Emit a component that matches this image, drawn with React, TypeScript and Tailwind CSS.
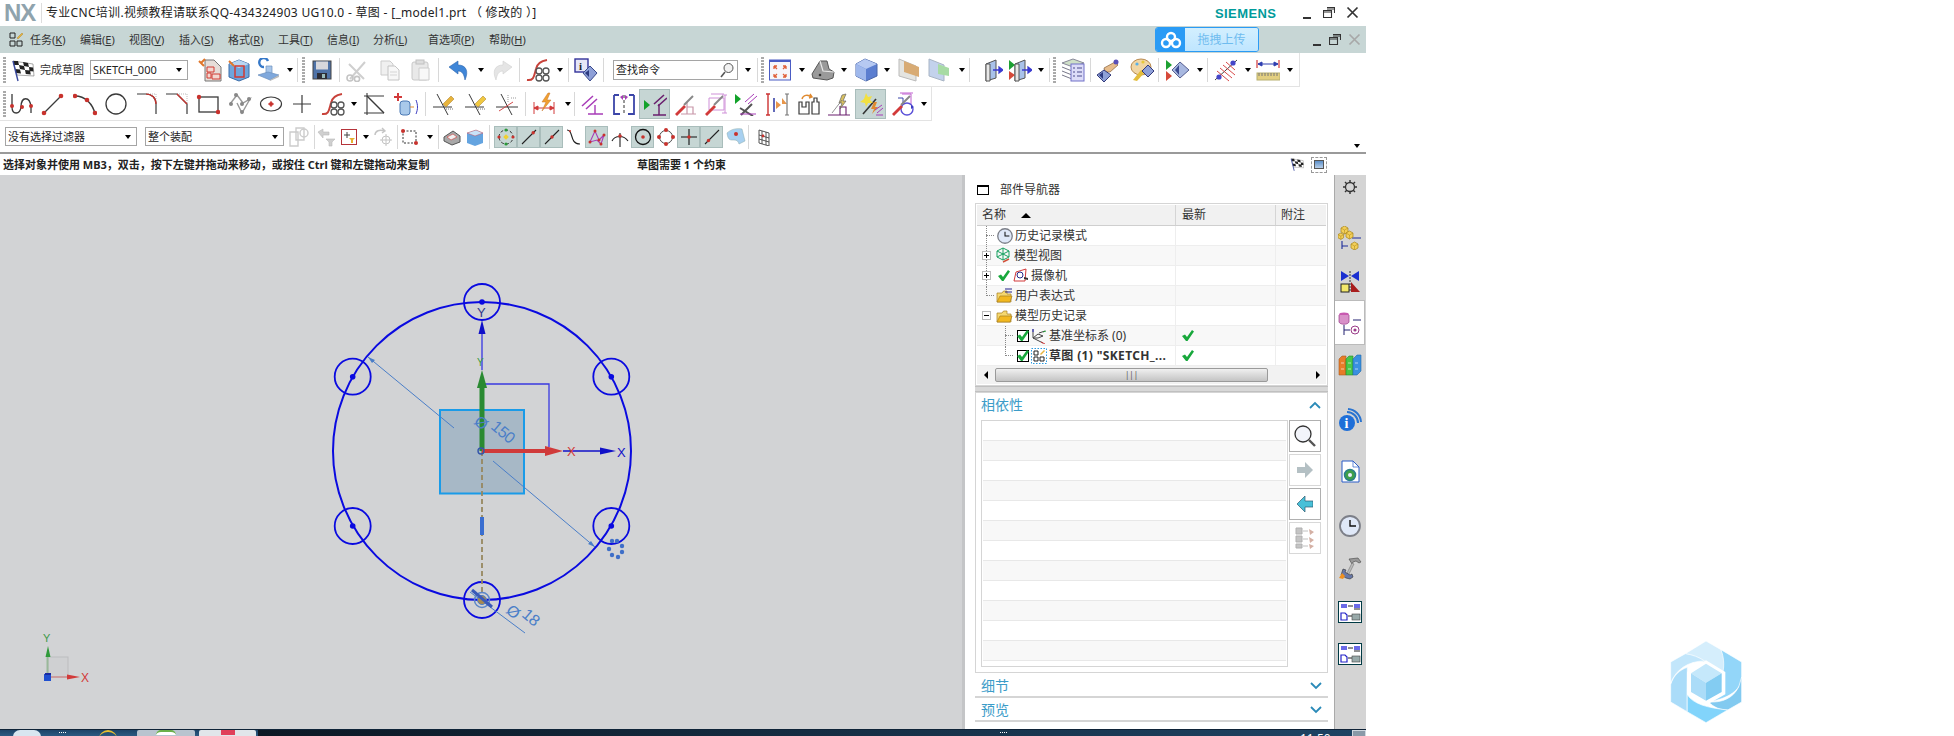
import React from "react";

const R = "#c8322d";
const D = "#3a3a3a";
const P = "#a83cb8";
const M = "#6a1f6e";
const B = "#3b45a8";

function Ic({ w = 24, h = 24, children }: { w?: number; h?: number; children?: React.ReactNode }) {
  return (
    <svg width={w} height={h} viewBox={`0 0 ${w} ${h}`} fill="none" className="block shrink-0">
      {children}
    </svg>
  );
}

const Dot = ({ x, y, r = 2, c = R }: { x: number; y: number; r?: number; c?: string }) => <circle cx={x} cy={y} r={r} fill={c} />;

/* ---------- toolbar icons ---------- */
const Flag = ({ s = 1 }: { s?: number }) => (
  <svg width={24 * s} height={24 * s} viewBox="0 0 24 24" className="block shrink-0">
    <path d="M2 3 L22 6 L23 18 L6 17 Z" fill="#fff" stroke="#555" strokeWidth=".5" />
    <path d="M2 3h5l1 4H3zM12 4l5 1 1 4-5-1zM8 7l5 1 1 4-5-1zM18 9l4 .5.5 4-4-.5zM4 11l5 .5 1 4-5-.5zM14 12l5 .5.8 4-5-.5z" fill="#222" />
    <path d="M2 3 L7 23" stroke="#3b4aa0" strokeWidth="1.4" />
  </svg>
);
const SheetA = () => (
  <Ic>
    <path d="M7 2h9l7 7v14H7z" fill="#e6ddd8" stroke="#777" />
    <path d="M1 3l5 5M7 1L3 5" stroke="#e0762a" strokeWidth="2" />
    <path d="M9 9h7v5H9zM9 15h4v5H9zM14 16h8v5h-8z" fill="#f3d7d0" stroke="#d13a33" />
  </Ic>
);
const CubeA = () => (
  <Ic>
    <path d="M12 2l10 4v13l-10 4-10-4V6z" fill="#6fa5dc" stroke="#3b6ca8" />
    <path d="M2 6l10 4 10-4-10-4z" fill="#b9d6f2" />
    <rect x="8" y="8" width="9" height="11" fill="none" stroke="#d13a33" strokeWidth="1.5" />
    <path d="M2 3l5 5" stroke="#e0762a" strokeWidth="2" />
  </Ic>
);
const MotionA = () => (
  <Ic>
    <path d="M8 9a4.5 4.5 0 1 1 4-6" stroke="#3578c8" strokeWidth="2.4" />
    <path d="M10 8h6v8h-6z" fill="#a8c6ea" stroke="#6b8fbd" strokeWidth=".7" />
    <path d="M2 17l10-3 11 3-9 5z" fill="#7fa8dc" stroke="#6b8fbd" strokeWidth=".7" />
    <path d="M14 22l9-5v2l-9 4z" fill="#bbb" />
  </Ic>
);
const Save = () => (
  <Ic w={20} h={20}>
    <rect x="1" y="1" width="18" height="18" fill="#4f73a8" stroke="#444" />
    <rect x="4" y="1.5" width="12" height="8" fill="#d8d8dc" />
    <rect x="5" y="13" width="10" height="6" fill="#2d2d35" />
    <rect x="10" y="14" width="3" height="4" fill="#9bb" />
  </Ic>
);
const Scissors = () => (
  <Ic>
    <path d="M5 21L20 4M19 21L4 6" stroke="#cfcfcf" strokeWidth="2" />
    <circle cx="5" cy="20" r="3" stroke="#c4c4c4" strokeWidth="1.6" />
    <circle cx="12" cy="21" r="2.6" stroke="#c4c4c4" strokeWidth="1.6" />
  </Ic>
);
const Copy = () => (
  <Ic>
    <path d="M3 3h9l3 3v11H3z" fill="#f0f0f0" stroke="#ccc" />
    <path d="M10 8h7l4 4v10H10z" fill="#f7f7f7" stroke="#c4c4c4" />
    <path d="M12 14h7M12 17h7" stroke="#d5d5d5" />
  </Ic>
);
const Paste = () => (
  <Ic>
    <rect x="3" y="4" width="16" height="18" rx="2" fill="#e9e9e9" stroke="#c8c8c8" />
    <rect x="7" y="2" width="8" height="4" fill="#ddd" stroke="#c0c0c0" />
    <path d="M10 10h10v12H10z" fill="#f8f8f8" stroke="#ccc" />
  </Ic>
);
const Undo = () => (
  <Ic>
    <path d="M2 9l9-6v4c8 0 11 6 7 15-1-6-3-9-7-9v3z" fill="#3f86d8" stroke="#2a63ab" strokeWidth=".6" />
  </Ic>
);
const Redo = () => (
  <Ic>
    <path d="M22 9l-9-6v4C5 7 2 13 6 22c1-6 3-9 7-9v3z" fill="#e5e5e5" stroke="#d0d0d0" strokeWidth=".6" />
  </Ic>
);
const Offset = () => (
  <Ic>
    <path d="M1 22c7 1 7-4 9-11 1-5 4-8 11-9" stroke="#c8423a" strokeWidth="2" />
    <circle cx="13" cy="13" r="3" stroke="#555" strokeWidth="1.3" />
    <circle cx="20" cy="13" r="3" stroke="#555" strokeWidth="1.3" />
    <circle cx="13" cy="20" r="3" stroke="#555" strokeWidth="1.3" />
    <circle cx="20" cy="20" r="3" stroke="#555" strokeWidth="1.3" />
  </Ic>
);
const InfoDia = () => (
  <Ic>
    <rect x="1" y="1" width="13" height="13" fill="#e6e6f7" stroke="#33339a" strokeWidth="1.4" />
    <text x="5" y="12" fontSize="11" fontWeight="700" fill="#222" fontFamily="Liberation Serif, serif">i</text>
    <path d="M16 8l7 7-7 8-7-8z" fill="#8ea0d8" stroke="#3a4a8c" />
    <path d="M15 12l-4 3 4 4z" fill="#2c3a80" />
  </Ic>
);
const Fit = () => (
  <Ic>
    <rect x="1.5" y="2" width="21" height="20" fill="#f6f6fb" stroke="#4a5cc4" />
    <rect x="1.5" y="2" width="21" height="2" fill="#4a5cc4" />
    <path d="M6 8l3 3M18 8l-3 3M6 19l3-3M18 19l-3-3M6 8h3M6 8v3M18 8h-3M18 8v3M6 19h3M6 19v-3M18 19h-3M18 19v-3" stroke="#e0603a" strokeWidth="1.3" />
  </Ic>
);
const Bracket = () => (
  <Ic>
    <path d="M1 16l8-13h7l2 8 5 3-1 6-6 2-14-2z" fill="#9a9a9a" stroke="#555" />
    <path d="M9 3l3 10 11 1" stroke="#e8e8e8" strokeWidth="1.2" />
    <circle cx="9" cy="17" r="1.3" fill="#333" />
  </Ic>
);
const Block = () => (
  <Ic>
    <path d="M2 6l9-5 12 5v12l-11 5-10-5z" fill="#5b7ed0" stroke="#4a66a8" />
    <path d="M2 6l9-5 12 5-11 5z" fill="#b6c9f2" />
    <path d="M2 6l10 5v12l-10-5z" fill="#9fb8ec" />
  </Ic>
);
const Plate1 = () => (
  <Ic>
    <path d="M3 1l17 7v15l-17-5z" fill="#e4e4e0" stroke="#bbb" />
    <path d="M8 3l15 6v10l-15-5z" fill="#d8ab74" />
  </Ic>
);
const Plate2 = () => (
  <Ic>
    <path d="M2 1l15 6v16L2 18z" fill="#c3d2ec" stroke="#a8b4c4" />
    <path d="M11 6l11 4v8l-11-2z" fill="#a7dba4" />
  </Ic>
);
const Door = ({ both }: { both?: boolean }) => (
  <Ic>
    {both && <path d="M1 2l6 5-6 5z" fill="#1da032" />}
    {both && <path d="M1 13l6 4-6 5z" fill="#d64a3a" />}
    <path d="M7 6l10-4v18l-10 3z" fill="#a9c2ea" stroke="#555" />
    <path d="M7 6h4v17H7z" fill="#e8e8e8" stroke="#555" />
    <path d="M14 12h9M20 9l4 3-4 3z" stroke="#3b3bd0" strokeWidth="1.3" fill="#3b3bd0" />
  </Ic>
);
const Stack = () => (
  <Ic>
    <path d="M1 5l11-4 11 4-11 4z" fill="#cfe0c8" stroke="#889" />
    <path d="M1 9l10 4M1 13l10 4M1 17l10 4" stroke="#778" />
    <rect x="10" y="6" width="13" height="17" fill="#dcdcf8" stroke="#7070c8" />
    <path d="M12 10h2M16 10h5M12 14h2M16 14h5M12 18h2M16 18h5" stroke="#4a4a8c" />
  </Ic>
);
const Hand = () => (
  <Ic>
    <path d="M8 10l11-6 3 3-8 7H9z" fill="#e8bd8c" stroke="#86603a" strokeWidth=".7" />
    <circle cx="20" cy="4" r="2.5" fill="#5a50b8" />
    <path d="M8 12l7 5-7 7-7-7z" fill="#8ea0d8" stroke="#333a7a" />
    <path d="M7 14l-4 3 4 4z" fill="#2c3a80" />
  </Ic>
);
const Palette = () => (
  <Ic>
    <ellipse cx="11" cy="9" rx="10" ry="8" fill="#f1d6a4" stroke="#b88a50" />
    <circle cx="7" cy="6" r="1.6" fill="#58b0e8" />
    <circle cx="13" cy="4" r="1.6" fill="#e8c838" />
    <path d="M3 22l8-10 4 2-8 9z" fill="#e3bd3c" />
    <path d="M18 7l6 6-6 6-6-6z" fill="#8ea0d8" stroke="#333a7a" />
  </Ic>
);
const Views = () => (
  <Ic>
    <path d="M1 2l6 5-6 5z" fill="#1da032" />
    <path d="M1 13l6 5-6 5z" fill="#d64a3a" />
    <path d="M15 4l9 8-9 8-8-8z" fill="#a8b8e0" stroke="#555e90" />
    <path d="M14 7l-4 5 4 5z" fill="#3a4a90" />
  </Ic>
);
const Section = () => (
  <Ic>
    <path d="M1 22L23 2" stroke="#444" />
    <path d="M6 10l12 10M9 7l12 10M12 4l9 8M3 13l12 10" stroke="#d84a4a" />
    <circle cx="5" cy="19" r="2.6" fill="#4545c8" />
    <circle cx="19" cy="5" r="2.6" fill="#4545c8" />
  </Ic>
);
const Ruler = () => (
  <Ic>
    <path d="M1 2v8M23 2v8" stroke="#d23a3a" strokeWidth="1.2" />
    <path d="M2 6h20M2 6l4-2v4zM22 6l-4-2v4z" stroke="#2f3fb0" fill="#2f3fb0" />
    <rect x="1" y="15" width="23" height="7" fill="#e3cf80" stroke="#b8b070" />
    <path d="M3 15v3M6 15v3M9 15v3M12 15v3M15 15v3M18 15v3M21 15v3" stroke="#777" />
  </Ic>
);
const Cloud = () => (
  <Ic w={22} h={18}>
    <circle cx="11" cy="6" r="4" stroke="#fff" strokeWidth="2.4" />
    <circle cx="6" cy="12" r="4" stroke="#fff" strokeWidth="2.4" />
    <circle cx="16" cy="12" r="4" stroke="#fff" strokeWidth="2.4" />
  </Ic>
);

/* row 2 */
const Spline = () => (
  <Ic w={26} h={24}>
    <path d="M3 2v13c0 8 8 8 9 0 0-11 9-11 10 0v6" stroke={D} strokeWidth="1.3" />
    <Dot x={3} y={14} /><Dot x={13} y={15} /><Dot x={22} y={14} />
  </Ic>
);
const Line = () => (
  <Ic>
    <path d="M3 21L20 4" stroke={D} strokeWidth="1.2" />
    <Dot x={3} y={21} r={2.3} /><Dot x={20} y={4} r={2.3} />
  </Ic>
);
const Arc = () => (
  <Ic>
    <path d="M2 4c10 0 18 8 20 18" stroke={D} strokeWidth="1.5" />
    <Dot x={2} y={4} r={2.3} /><Dot x={14} y={8} r={2.3} /><Dot x={22} y={21} r={2.3} />
  </Ic>
);
const Circle = () => (
  <Ic><circle cx="12" cy="12" r="10" stroke={D} strokeWidth="1.3" /></Ic>
);
const Fillet = () => (
  <Ic>
    <path d="M13 2h8v8" stroke="#bbb" strokeDasharray="1 1" />
    <path d="M2 2h9c6 0 10 4 10 10v10" stroke={D} strokeWidth="1.2" />
    <path d="M11 2c6 0 10 4 10 10" stroke={R} strokeWidth="1.2" />
  </Ic>
);
const Chamfer = () => (
  <Ic>
    <path d="M12 2h10v10" stroke="#bbb" strokeDasharray="1 1" />
    <path d="M1 2h11l10 10v10" stroke={D} strokeWidth="1.2" />
    <path d="M12 2l10 10" stroke={R} strokeWidth="1.2" />
  </Ic>
);
const Rect = () => (
  <Ic>
    <rect x="3" y="5" width="19" height="15" stroke={D} strokeWidth="1.3" />
    <Dot x={3} y={5} r={2.2} /><Dot x={22} y={20} r={2.2} />
  </Ic>
);
const Poly = () => (
  <Ic>
    <path d="M2 12l7-9 6 8 7-4-8 14-5-10" stroke="#999" strokeWidth="1.4" />
    <Dot x={3} y={12} c="#888" /><Dot x={8} y={3} c="#888" /><Dot x={14} y={12} c="#888" /><Dot x={21} y={7} c="#888" /><Dot x={14} y={20} c="#888" />
  </Ic>
);
const Ellipse = () => (
  <Ic>
    <ellipse cx="12" cy="12" rx="10.5" ry="7" stroke={D} strokeWidth="1.2" />
    <path d="M9 12h6M12 9v6" stroke={R} />
    <Dot x={12} y={12} />
  </Ic>
);
const Cross = () => (
  <Ic><path d="M3 12h18M12 3v18" stroke={D} strokeWidth="1.2" /></Ic>
);
const Trim = () => (
  <Ic>
    <path d="M1 4h20M1 21h20M4 1v22" stroke={D} strokeWidth="1.1" />
    <path d="M4 4l17 17" stroke={D} strokeWidth="1.4" />
  </Ic>
);
const Cyl = () => (
  <Ic>
    <path d="M0 5h8M4 1v8" stroke="#d23a3a" strokeWidth="2" />
    <rect x="6" y="9" width="10" height="14" rx="3" fill="#a9c9ea" stroke="#4a78b4" />
    <path d="M16 15h4" stroke="#e08a30" />
    <path d="M22 8c2 5 2 9 0 14" stroke="#3b3bc0" />
  </Ic>
);
const PencilA = ({ c = "#e8b43c" }: { c?: string }) => (
  <Ic>
    <path d="M1 15h19M5 2l11 21" stroke={D} />
    <path d="M11 12l8-8 3 3-8 8z" fill={c} stroke="#a57820" strokeWidth=".5" />
    <path d="M14 17h8" stroke="#777" strokeDasharray="1 1" />
  </Ic>
);
const Slash = () => (
  <Ic>
    <path d="M1 15h22M6 2l11 21" stroke={D} />
    <path d="M4 19l14-9" stroke="#d24a4a" />
    <path d="M13 3v8M16 6h6" stroke="#999" strokeDasharray="1 1" />
  </Ic>
);
const Bolt = () => (
  <Ic w={24} h={24}>
    <path d="M2 10v12M22 10v12M2 16h20M2 16l4-2v4zM22 16l-4-2v4z" stroke="#d23a3a" fill="#d23a3a" />
    <path d="M16 1l-6 9h4l-4 9 9-11h-4l3-7z" fill="#f0a030" stroke="#c8752a" strokeWidth=".5" />
  </Ic>
);
const Par = () => (
  <Ic>
    <path d="M2 14L13 4M6 17L17 7" stroke={P} strokeWidth="1.5" />
    <path d="M15 13v9M8 22h15" stroke={P} strokeWidth="1.4" />
  </Ic>
);
const ParFrame = () => (
  <Ic>
    <path d="M2 3h5M2 3v19h6M22 3h-5M22 3v19h-6" stroke={B} strokeWidth="1.8" />
    <path d="M12 3v20" stroke="#333" strokeDasharray="3 2" />
    <path d="M8 5l3-2 0 5zM16 5l-3-2 0 5z" fill={P} />
  </Ic>
);
const ParActive = () => (
  <Ic>
    <path d="M1 8l6 5-6 5z" fill="#12a22a" />
    <path d="M11 12L21 3M15 14L24 6" stroke={M} strokeWidth="1.6" />
    <path d="M16 12v11M10 23h13" stroke={M} strokeWidth="1.4" />
  </Ic>
);
const Tool = () => (
  <>
    <path d="M2 22l9-9 2 2-9 9z" fill="#d23a3a" />
    <path d="M11 13l9-9" stroke="#888" strokeWidth="2" />
  </>
);
const Driver1 = () => (
  <Ic>
    <path d="M8 22h15M14 10v12M14 15h6v7" stroke="#c896a8" strokeWidth="1.2" />
    <Tool />
  </Ic>
);
const Driver2 = () => (
  <Ic>
    <path d="M6 6h15v12H6zM22 3v18M19 3h5M19 21h5M8 2h13" stroke="#cf90d8" />
    <Tool />
  </Ic>
);
const Driver3 = () => (
  <Ic>
    <path d="M1 2l6 5-6 5z" fill="#12a22a" />
    <path d="M11 10l9-8M14 12l9-8" stroke={P} />
    <path d="M6 16l13 8M18 12L7 23" stroke="#555" strokeWidth="2" />
    <path d="M6 22h16" stroke={P} />
  </Ic>
);
const Opposing = () => (
  <Ic>
    <path d="M3 2v21M1 2h4M1 23h4" stroke="#cc3333" strokeWidth="1.4" />
    <path d="M9 6v14" stroke={B} strokeWidth="1.6" />
    <path d="M11 9l5 4-5 4zM17 6l5 6-5 0z" fill="#e8964a" />
    <path d="M22 2v21M20 2h4M20 23h4" stroke="#777" strokeWidth="1.2" />
  </Ic>
);
const Swap = () => (
  <Ic>
    <path d="M2 22V10h3v5h4v-5h3v12zM15 22V10h2V6h3v4h2v12z" stroke={D} strokeWidth="1.2" />
    <path d="M5 7c1-4 6-5 9-2M13 2l2 3-3 1" stroke="#e08a30" strokeWidth="1.4" />
  </Ic>
);
const Bolt2 = () => (
  <Ic>
    <path d="M0 23h22M12 14v9M12 15h6v8" stroke={M} strokeWidth="1.1" />
    <path d="M4 21L14 8M14 3l-3 8h3l-2 6 6-8h-3l3-7z" stroke="#666" fill="#d8c060" strokeWidth=".7" />
  </Ic>
);
const Wand = () => (
  <Ic>
    <path d="M4 22L17 7" stroke="#333" strokeWidth="1.6" />
    <path d="M7 1l2 4 4-1-2 4 3 3-5 0-2 4-1-4-5-1 4-3z" fill="#f2e040" />
    <path d="M15 10l-3 7h3l-2 5 6-7h-3l2-5z" fill="#e08a30" />
    <path d="M16 18l7-5M18 21l6-5M17 23h7" stroke={P} />
  </Ic>
);
const Auto = () => (
  <Ic>
    <path d="M12 2h9v10M10 1h13" stroke="#c060d0" />
    <path d="M8 6h5v6" stroke={B} />
    <circle cx="17" cy="17" r="6" stroke="#5a50d8" strokeWidth="1.4" />
    <path d="M21 13l3 2-3 2z" fill="#3b3bc0" />
    <Tool />
  </Ic>
);

/* row 3 */
const Chain = () => (
  <Ic><path d="M3 7h8v14H3zM9 3h8v12H9z" stroke="#ccc" strokeWidth="1.4" /><circle cx="17" cy="8" r="4" stroke="#ccc" strokeWidth="1.4" /></Ic>
);
const GFilter = () => (
  <Ic w={20} h={20}><path d="M1 5l5-3v3h6v3H6v3zM9 12h9l-3 3v4h-3v-4z" fill="#cfcfcf" stroke="#bbb" strokeWidth=".6" /></Ic>
);
const RFilter = () => (
  <Ic w={16} h={16}>
    <rect x=".5" y=".5" width="15" height="15" fill="#fff" stroke="#b5333a" />
    <path d="M6 3v6M3 6h6" stroke="#444" /><path d="M8 9h6l-2 2v3h-2v-3z" fill="#e8b030" />
  </Ic>
);
const GCross = () => (
  <Ic w={20} h={20}>
    <path d="M2 8c0-4 5-6 9-4M9 1l3 3-3 2" stroke="#c4c4c4" strokeWidth="1.4" />
    <circle cx="13" cy="13" r="4" stroke="#c4c4c4" /><path d="M13 7v12M7 13h12" stroke="#c4c4c4" />
  </Ic>
);
const RectSel = () => (
  <Ic w={18} h={18}>
    <rect x="2" y="3" width="13" height="12" stroke="#333" strokeDasharray="2 1.5" />
    <Dot x={2} y={3} /><Dot x={15} y={15} />
  </Ic>
);
const Shade1 = () => (
  <Ic w={18} h={18}>
    <path d="M1 9l9-6 7 5v6l-8 3-8-4z" fill="#a8a8a8" stroke="#555" />
    <path d="M4 9l6-3 4 3-6 3z" fill="#f0f0f0" stroke="#d23a3a" strokeWidth=".6" />
  </Ic>
);
const Shade2 = () => (
  <Ic w={18} h={18}>
    <path d="M1 5l9-3 7 3v10l-8 3-8-3z" fill="#64a4e0" />
    <path d="M1 5l9-3 7 3-8 3z" fill="#c8e2f8" stroke="#c8505a" strokeWidth=".5" />
  </Ic>
);
const SnapEnd = () => (
  <Ic w={18} h={18}>
    <path d="M2 9a7 7 0 0 1 14 0a7 7 0 0 1-14 0" stroke="#333" strokeDasharray="3 2" />
    <rect x="7" y="7" width="4" height="4" fill="#f0d030" transform="rotate(45 9 9)" />
    <Dot x={2} y={9} r={1.6} /><Dot x={16} y={9} r={1.6} /><Dot x={9} y={2} r={1.6} c="#2a9a3a" /><Dot x={9} y={16} r={1.6} c="#2a9a3a" />
  </Ic>
);
const SnapLine = ({ t = 0.8 }: { t?: number }) => (
  <Ic w={18} h={18}>
    <path d="M2 16L16 2" stroke="#222" strokeWidth="1.1" />
    <Dot x={2 + 14 * t} y={16 - 14 * t} r={1.7} />
  </Ic>
);
const SnapCurve = () => (
  <Ic w={20} h={20}><path d="M3 3c7 0 2 14 13 14" stroke="#222" strokeWidth="1.2" /><Dot x={6} y={4} r={1} /></Ic>
);
const SnapPoly = () => (
  <Ic w={18} h={18}>
    <path d="M2 14L7 3l4 9 5-5-3 9-4-4z" stroke={P} strokeWidth="1.1" />
    <Dot x={7} y={3} r={1.5} /><Dot x={11} y={12} r={1.5} /><Dot x={16} y={7} r={1.5} /><Dot x={13} y={16} r={1.5} /><Dot x={2} y={14} r={1.5} />
  </Ic>
);
const SnapTan = () => (
  <Ic w={20} h={20}>
    <path d="M2 14c3-6 12-6 16 0M10 6v14" stroke="#222" strokeWidth="1.1" />
    <Dot x={10} y={9} r={1.8} />
  </Ic>
);
const SnapCenter = () => (
  <Ic w={18} h={18}><circle cx="9" cy="9" r="7.5" stroke="#111" strokeWidth="1.3" /><Dot x={9} y={9} r={1.8} /></Ic>
);
const SnapRing = () => (
  <Ic w={20} h={20}>
    <circle cx="10" cy="10" r="6.5" stroke="#444" />
    <Dot x={10} y={3} /><Dot x={10} y={17} /><Dot x={3} y={10} /><Dot x={17} y={10} />
  </Ic>
);
const SnapCross = () => (
  <Ic w={18} h={18}><path d="M1 9h16M9 1v16" stroke="#111" strokeWidth="1.1" /><Dot x={9} y={9} r={1.8} /></Ic>
);
const SnapFace = () => (
  <Ic w={20} h={20}>
    <path d="M1 6c4-4 10-5 15-4l3 12-6 3c-1-3-2-4-5-4-3 0-6 1-7-7z" fill="#a8d0f0" stroke="#8aa" strokeWidth=".5" />
    <Dot x={10} y={7} />
  </Ic>
);
const Grid = () => (
  <Ic w={14} h={18}>
    <path d="M2 2l10 3v13L2 15zM5 3v13M9 4v13M2 7l10 3M2 11l10 3" stroke="#444" strokeWidth=".9" />
    <Dot x={6} y={8} r={1.4} />
  </Ic>
);

/* right rail */
const Gear = () => (
  <Ic w={16} h={16}>
    <circle cx="8" cy="8" r="4.5" stroke="#333" strokeWidth="1.3" />
    <path d="M8 1v2.5M8 12.5V15M1 8h2.5M12.5 8H15M3 3l2 2M11 11l2 2M13 3l-2 2M5 11l-2 2" stroke="#333" strokeWidth="1.4" />
  </Ic>
);
const Cubelet = ({ x, y, s = 5 }: { x: number; y: number; s?: number }) => (
  <g transform={`translate(${x} ${y})`}>
    <path d={`M0 ${s * 0.4}L${s * 0.7} 0L${s * 1.4} ${s * 0.4}V${s * 1.2}L${s * 0.7} ${s * 1.6}L0 ${s * 1.2}z`} fill="#f3cf58" stroke="#a88418" strokeWidth=".7" />
    <path d={`M0 ${s * 0.4}L${s * 0.7} ${s * 0.8}L${s * 1.4} ${s * 0.4}M${s * 0.7} ${s * 0.8}V${s * 1.6}`} stroke="#a88418" strokeWidth=".5" />
  </g>
);
const Assemblies = () => (
  <Ic>
    <path d="M4 15v8M4 20h6M14 12h9" stroke="#1a2a9a" strokeWidth="1.1" />
    <Cubelet x={3} y={0} s={5} />
    <Cubelet x={8} y={5} s={5} />
    <Cubelet x={0} y={7} s={4} />
    <Cubelet x={13} y={16} s={5} />
  </Ic>
);
const Constraints = () => (
  <Ic w={20} h={24}>
    <path d="M1 1l8 5-8 5zM19 1l-8 5 8 5z" fill="#1a2fd0" />
    <rect x="1" y="14" width="8" height="8" fill="#f3e86a" stroke="#222" />
    <path d="M11 22V12l9 10z" fill="#a81d1d" />
    <path d="M10 1v21" stroke="#333" strokeDasharray="2 1" />
  </Ic>
);
const PartNav = () => (
  <Ic>
    <ellipse cx="6" cy="4" rx="5" ry="2.4" fill="#c85ab0" />
    <path d="M1 4v7c1 3 9 3 10 0V4" fill="#d890c8" stroke="#9a3a88" strokeWidth=".7" />
    <path d="M15 9h8M6 14v10M6 19h6" stroke="#222070" />
    <circle cx="17" cy="19" r="4" stroke="#9a3a88" /><circle cx="17" cy="19" r="1.6" fill="#9a3a88" />
  </Ic>
);
const Books = () => (
  <Ic w={24} h={22}>
    <path d="M1 5l3-3h4v19H1z" fill="#e87c28" stroke="#a85a20" strokeWidth=".6" />
    <path d="M8 5l3-3h4v19H8z" fill="#48c848" stroke="#28882a" strokeWidth=".6" />
    <path d="M15 5l4-4h4v16l-4 4h-4z" fill="#3a90e0" stroke="#2268a8" strokeWidth=".6" />
    <path d="M3 9h3M10 9h3M17 9h3M3 15h3M10 15h3M17 15h3" stroke="#ffffff" strokeOpacity=".6" />
  </Ic>
);
const InfoWave = () => (
  <Ic>
    <circle cx="9" cy="15" r="8" fill="#1f6fd8" />
    <text x="6.5" y="20" fontSize="14" fontWeight="700" fill="#fff" fontFamily="Liberation Serif, serif">i</text>
    <path d="M9 4a11 11 0 0 1 11 11M10 1a14 14 0 0 1 13 13" stroke="#2a74d0" strokeWidth="2" />
  </Ic>
);
const DocGlobe = () => (
  <Ic w={20} h={24}>
    <path d="M2 1h11l6 6v15H2z" fill="#fff" stroke="#2a5cc8" />
    <path d="M13 1v6h6" stroke="#2a5cc8" strokeWidth=".7" />
    <circle cx="10" cy="15" r="5.5" fill="#3fa04a" stroke="#2a7f8a" strokeWidth="1.5" />
    <circle cx="10" cy="15" r="2" fill="#eef" />
  </Ic>
);
const Clock = ({ s = 22 }: { s?: number }) => (
  <svg width={s} height={s} viewBox="0 0 22 22" className="block shrink-0">
    <circle cx="11" cy="11" r="10" fill="#dfe8f8" stroke="#7c7f88" strokeWidth="1.8" />
    <path d="M11 5v6h6" stroke="#111" strokeWidth="1.4" fill="none" />
  </svg>
);
const Tools = () => (
  <Ic>
    <path d="M11 2l9-1 3 4-2 1-3-2-3 1-1 2z" fill="#999" stroke="#444" strokeWidth=".6" />
    <path d="M14 6l2 1-6 12-2-1z" fill="#bbb" stroke="#666" strokeWidth=".5" />
    <path d="M5 12l3 1-1 2 5 3 2-1 1 3-3 2-4-1-5-3z" fill="#6878a8" stroke="#333" strokeWidth=".6" />
    <path d="M1 21l3-5 3 3-2 3z" fill="#f09020" />
  </Ic>
);
const Pages = () => (
  <Ic w={24} h={22}>
    <rect x=".5" y=".5" width="23" height="21" fill="#fff" stroke="#003a44" strokeWidth="1" />
    <path d="M3 3h6v4H3zM16 3h6v4h-6z" fill="#6a6ae8" />
    <path d="M10 5h5M16 8h6M10 15h5" stroke="#222" />
    <path d="M3 12h4l2 2v5H3z" fill="#fff" stroke="#2222c8" strokeWidth="1.2" />
    <rect x="14" y="13" width="8" height="6" fill="#9aa" stroke="#444" strokeWidth=".6" />
  </Ic>
);

/* ---------- toolbar bits ---------- */
const Caret = () => <span className="block w-0 h-0 border-x-[3.5px] border-x-transparent border-t-[4px] border-t-black" />;
const Slot = ({ className, children }: { className: string; children?: React.ReactNode }) => (
  <div className={`flex items-center justify-center shrink-0 h-full ${className}`}>{children}</div>
);
const DD = ({ className }: { className: string }) => (
  <Slot className={className}><Caret /></Slot>
);
const Sep = ({ className = "mx-[2px]" }: { className?: string }) => <div className={`w-px h-[24px] bg-[#d8d8d8] shrink-0 ${className}`} />;
const Grip = ({ className = "" }: { className?: string }) => (
  <div className={`w-[3px] h-[26px] shrink-0 bg-[repeating-linear-gradient(to_bottom,#aaaaaa_0,#aaaaaa_2px,#ffffff_2px,#ffffff_3px)] ${className}`} />
);
const Active = ({ className, children }: { className: string; children?: React.ReactNode }) => (
  <div className={`flex items-center justify-center shrink-0 bg-[#c6d6d4] border border-[#a9bdbb] ${className}`}>{children}</div>
);
const Select = ({ className, text }: { className: string; text: string }) => (
  <div className={`flex items-center justify-between shrink-0 bg-white border border-[#a5a5a5] px-[2px] text-[11px] text-[#222] ${className}`}>
    <span>{text}</span>
    <span className="pr-[3px]"><Caret /></span>
  </div>
);

const Menu = ({ name, k, className }: { name: string; k: string; className: string }) => (
  <span className={`shrink-0 text-[11px] text-[#333] ${className}`}>
    {name}(<span className="underline">{k}</span>)
  </span>
);

/* ---------- main regions ---------- */
function WinButtons({ close, className }: { close: string; className: string }) {
  return (
    <div className={`flex items-center shrink-0 ${className}`}>
      <Ic w={12} h={14}><path d="M3 12h8" stroke="#333" strokeWidth="2" /></Ic>
      <Ic w={12} h={14}><path d="M4 1.5h7.5V7M.5 4.5h8v7h-8zM.5 6h8M4 3h7" stroke="#333" strokeWidth="1.1" /></Ic>
      <Ic w={13} h={14}><path d="M1.5 1.5l10 10M11.5 1.5l-10 10" stroke={close} strokeWidth="1.7" /></Ic>
    </div>
  );
}

function TitleBar() {
  return (
    <div className="flex items-center h-[26px] bg-white shrink-0">
      <span className="w-[41px] shrink-0 pl-[4px] text-[24px] leading-none font-bold text-[#8fa3ad] font-['Liberation_Sans',sans-serif] tracking-[-1px]">NX</span>
      <div className="w-px h-[20px] bg-[#dddddd] shrink-0" />
      <span className="pl-[4px] w-[1173px] shrink-0 text-[12px] tracking-[0.3px] text-[#222] whitespace-nowrap">
        专业CNC培训.视频教程请联系QQ-434324903 UG10.0 - 草图 - [_model1.prt （ 修改的 ）]
      </span>
      <span className="w-[85px] shrink-0 text-[13px] font-bold text-[#009b9b] tracking-[0.4px] font-['Liberation_Sans',sans-serif]">SIEMENS</span>
      <WinButtons close="#333" className="gap-[11px]" />
    </div>
  );
}

function MenuBar() {
  return (
    <div className="flex items-center h-[27px] bg-[#c7d6d5] shrink-0">
      <div className="pl-[9px] w-[30px] shrink-0">
        <Ic w={15} h={15}>
          <path d="M1 1h5v5H1zM1 9h5v5H1zM8 9h5v5H8z" stroke="#222" />
          <path d="M8 6l5-5 1 1-5 5z" fill="#e8b43c" stroke="#a57820" strokeWidth=".4" />
        </Ic>
      </div>
      <Menu name="任务" k="K" className="w-[50px]" />
      <Menu name="编辑" k="E" className="w-[49px]" />
      <Menu name="视图" k="V" className="w-[50px]" />
      <Menu name="插入" k="S" className="w-[49px]" />
      <Menu name="格式" k="R" className="w-[50px]" />
      <Menu name="工具" k="T" className="w-[49px]" />
      <Menu name="信息" k="I" className="w-[46px]" />
      <Menu name="分析" k="L" className="w-[55px]" />
      <Menu name="首选项" k="P" className="w-[61px]" />
      <Menu name="帮助" k="H" className="w-[666px]" />
      <div className="flex w-[104px] h-[25px] rounded-[3px] border border-[#2a9bf5] overflow-hidden shrink-0">
        <div className="w-[29px] bg-[#2a9bf5] flex items-center justify-center"><Cloud /></div>
        <div className="flex-1 bg-gradient-to-b from-[#d3effe] to-[#bfe6ff] flex items-center justify-center text-[12px] text-[#6fbcef]">拖拽上传</div>
      </div>
      <div className="w-[51px] shrink-0" />
      <WinButtons close="#a8a8a8" className="gap-[7px]" />
    </div>
  );
}

function Toolbar1() {
  return (
    <div className="flex items-center h-[34px] w-[1300px] pl-[3px] border-r border-b border-[#e3e3e3] bg-white shrink-0">
      <Grip />
      <Slot className="w-[34px]"><Flag /></Slot>
      <span className="w-[47px] shrink-0 text-[11px] text-[#333]">完成草图</span>
      <Select className="ml-[3px] w-[98px] h-[20px]" text="SKETCH_000" />
      <div className="w-[7px] shrink-0" />
      <Slot className="w-[29px]"><SheetA /></Slot>
      <Slot className="w-[29px]"><CubeA /></Slot>
      <Slot className="w-[30px]"><MotionA /></Slot>
      <DD className="w-[14px]" />
      <Sep className="ml-0 mr-[4px]" />
      <Grip />
      <Slot className="w-[34px]"><Save /></Slot>
      <Sep className="mx-0" />
      <Slot className="w-[34px]"><Scissors /></Slot>
      <Slot className="w-[31px]"><Copy /></Slot>
      <Slot className="w-[31px]"><Paste /></Slot>
      <Sep />
      <Slot className="w-[35px]"><Undo /></Slot>
      <DD className="w-[10px]" />
      <Slot className="w-[31px]"><Redo /></Slot>
      <Sep />
      <Slot className="w-[31px]"><Offset /></Slot>
      <DD className="w-[13px]" />
      <Sep />
      <Slot className="w-[30px]"><InfoDia /></Slot>
      <Sep />
      <div className="ml-[7px] w-[125px] h-[20px] flex items-center justify-between border border-[#a5a5a5] px-[2px] text-[11px] text-[#222] shrink-0">
        <span>查找命令</span>
        <Ic w={16} h={16}>
          <circle cx="9.5" cy="6" r="4.5" fill="#f2f2f2" stroke="#555" />
          <path d="M6 10l-4 5" stroke="#555" strokeWidth="1.6" />
        </Ic>
      </div>
      <DD className="w-[19px]" />
      <Sep className="mx-0" />
      <Grip className="ml-[3px]" />
      <Slot className="w-[31px]"><Fit /></Slot>
      <DD className="w-[13px]" />
      <Slot className="w-[29px]"><Bracket /></Slot>
      <DD className="w-[14px]" />
      <Slot className="w-[29px]"><Block /></Slot>
      <DD className="w-[14px]" />
      <Slot className="w-[28px]"><Plate1 /></Slot>
      <Slot className="w-[33px]"><Plate2 /></Slot>
      <DD className="w-[14px]" />
      <Sep className="ml-0 mr-[8px]" />
      <Slot className="w-[26px]"><Door /></Slot>
      <Slot className="w-[32px]"><Door both /></Slot>
      <DD className="w-[10px]" />
      <Sep className="ml-[3px] mr-[3px]" />
      <Grip />
      <Slot className="w-[34px]"><Stack /></Slot>
      <Sep className="mx-0" />
      <Slot className="w-[34px]"><Hand /></Slot>
      <Slot className="w-[33px]"><Palette /></Slot>
      <Sep className="mx-0" />
      <Slot className="w-[36px]"><Views /></Slot>
      <DD className="w-[10px]" />
      <Sep className="ml-[2px] mr-0" />
      <Slot className="w-[36px]"><Section /></Slot>
      <DD className="w-[7px]" />
      <Slot className="w-[34px]"><Ruler /></Slot>
      <DD className="w-[10px]" />
    </div>
  );
}

function Toolbar2() {
  return (
    <div className="flex items-center h-[34px] w-[932px] pl-[3px] border-r border-b border-[#e3e3e3] bg-white shrink-0">
      <Grip />
      <Slot className="w-[31px]"><Spline /></Slot>
      <Slot className="w-[32px]"><Line /></Slot>
      <Slot className="w-[31px]"><Arc /></Slot>
      <Slot className="w-[31px]"><Circle /></Slot>
      <Slot className="w-[31px]"><Fillet /></Slot>
      <Slot className="w-[30px]"><Chamfer /></Slot>
      <Slot className="w-[32px]"><Rect /></Slot>
      <Slot className="w-[32px]"><Poly /></Slot>
      <Slot className="w-[30px]"><Ellipse /></Slot>
      <Slot className="w-[31px]"><Cross /></Slot>
      <Slot className="w-[31px]"><Offset /></Slot>
      <DD className="w-[12px]" />
      <Slot className="w-[30px]"><Trim /></Slot>
      <Slot className="w-[32px]"><Cyl /></Slot>
      <Sep className="ml-[3px] mr-[1px]" />
      <Slot className="w-[33px]"><PencilA /></Slot>
      <Slot className="w-[32px]"><PencilA c="#f0c840" /></Slot>
      <Slot className="w-[29px]"><Slash /></Slot>
      <Sep className="ml-[4px] mr-0" />
      <Slot className="w-[36px]"><Bolt /></Slot>
      <DD className="w-[12px]" />
      <Sep className="mx-0" />
      <Slot className="w-[34px]"><Par /></Slot>
      <Slot className="w-[30px]"><ParFrame /></Slot>
      <Active className="w-[31px] h-[30px]"><ParActive /></Active>
      <Slot className="w-[30px]"><Driver1 /></Slot>
      <Slot className="w-[30px]"><Driver2 /></Slot>
      <Slot className="w-[32px]"><Driver3 /></Slot>
      <Slot className="w-[30px]"><Opposing /></Slot>
      <Slot className="w-[33px]"><Swap /></Slot>
      <Slot className="w-[30px]"><Bolt2 /></Slot>
      <Active className="w-[31px] h-[30px]"><Wand /></Active>
      <Slot className="w-[31px]"><Auto /></Slot>
      <DD className="w-[13px]" />
    </div>
  );
}

function Toolbar3() {
  return (
    <div className="flex items-center h-[31px] pl-[5px] bg-white border-b-2 border-[#9a9a9a] shrink-0 box-content">
      <Select className="w-[132px] h-[19px]" text="没有选择过滤器" />
      <Select className="ml-[8px] w-[139px] h-[19px]" text="整个装配" />
      <Slot className="w-[30px]"><Chain /></Slot>
      <Sep className="mx-0" />
      <Slot className="w-[24px]"><GFilter /></Slot>
      <Slot className="w-[19px]"><RFilter /></Slot>
      <DD className="w-[16px]" />
      <Slot className="w-[18px]"><GCross /></Slot>
      <Sep className="ml-[5px] mr-0" />
      <Slot className="w-[24px]"><RectSel /></Slot>
      <DD className="w-[16px]" />
      <Sep className="mx-0" />
      <Slot className="w-[26px]"><Shade1 /></Slot>
      <Slot className="w-[20px]"><Shade2 /></Slot>
      <Sep className="mx-[4px]" />
      <Active className="w-[23px] h-[22px]"><SnapEnd /></Active>
      <Active className="w-[23px] h-[22px]"><SnapLine /></Active>
      <Active className="w-[23px] h-[22px]"><SnapLine t={0.5} /></Active>
      <Slot className="w-[22px]"><SnapCurve /></Slot>
      <Active className="w-[23px] h-[22px]"><SnapPoly /></Active>
      <Slot className="w-[23px]"><SnapTan /></Slot>
      <Active className="w-[23px] h-[22px]"><SnapCenter /></Active>
      <Slot className="w-[23px]"><SnapRing /></Slot>
      <Active className="w-[23px] h-[22px]"><SnapCross /></Active>
      <Active className="w-[23px] h-[22px]"><SnapLine t={0.25} /></Active>
      <Slot className="w-[25px]"><SnapFace /></Slot>
      <Sep className="mx-0" />
      <Slot className="w-[30px]"><Grid /></Slot>
      <div className="ml-[575px] self-end pb-[4px]"><Caret /></div>
    </div>
  );
}

function StatusBar() {
  return (
    <div className="flex items-center h-[21px] bg-white shrink-0">
      <span className="w-[637px] shrink-0 pl-[3px] text-[11px] font-bold text-[#222] whitespace-nowrap">选择对象并使用 MB3，双击，按下左键并拖动来移动，或按住 Ctrl 键和左键拖动来复制</span>
      <span className="w-[653px] shrink-0 text-[11px] font-bold text-[#222] whitespace-nowrap">草图需要 1 个约束</span>
      <Flag s={0.6} />
      <div className="ml-[7px] w-[16px] h-[16px] border border-dashed border-[#999] flex items-center justify-center">
        <div className="w-[10px] h-[9px] bg-gradient-to-b from-[#5c8fc8] to-[#b8d0ea] border border-[#555]" />
      </div>
    </div>
  );
}

function Canvas() {
  const holes: [number, number][] = [[482, 302], [352.7, 376.7], [611.3, 376.7], [352.7, 526], [611.3, 526], [482, 600]];
  const blue = "#0a0ae0";
  const dim = "#4a7ec8";
  return (
    <div className="w-[965px] shrink-0 bg-[#d2d3d5] border-r-[3px] border-[#c4c5c7]">
      <svg width="962" height="554" viewBox="0 175 962 554" className="block">
        <rect x="440" y="410" width="84" height="83.5" fill="#a7b8c6" stroke="#1a9be8" strokeWidth="2" />
        <circle cx="482" cy="451" r="149" fill="none" stroke={blue} strokeWidth="2" />
        {holes.map(([x, y]) => (
          <g key={`${x}-${y}`}>
            <circle cx={x} cy={y} r="18" fill="none" stroke={blue} strokeWidth="1.8" />
            <circle cx={x} cy={y} r="2.8" fill={blue} />
          </g>
        ))}
        <path d="M368 357L454 428M493 461L595 547M470 592L525 633" stroke={dim} strokeWidth="1" />
        <path d="M368 357l7 3-3 3zM595 547l-7-3 3-3z" fill={dim} />
        <path d="M482 451V600" stroke="#978860" strokeWidth="1.8" strokeDasharray="5 3" />
        <rect x="480" y="517" width="4" height="18" fill="#3a6ed0" />
        <path d="M485 384H549V447" fill="none" stroke="#3a3ae0" strokeWidth="1.3" />
        <path d="M482 333V370" stroke="#4a4ae0" strokeWidth="1.5" />
        <path d="M482 320l3.5 14h-7z" fill="#1010c8" />
        <path d="M563 451H600" stroke="#1010c8" strokeWidth="1.3" />
        <path d="M600 447.5l16 3.5-16 3.5z" fill="#1010c8" />
        <text x="477" y="317" fontSize="13" fill="#333a8a" fontFamily="Liberation Sans, sans-serif">Y</text>
        <text x="617" y="457" fontSize="13" fill="#1010c8" fontFamily="Liberation Sans, sans-serif">X</text>
        <text x="477" y="366" fontSize="10" fill="#3a9a3a" fontFamily="Liberation Sans, sans-serif">Y</text>
        <text x="567" y="456" fontSize="13" fill="#d23a3a" fontFamily="Liberation Sans, sans-serif">X</text>
        <path d="M482 451V386" stroke="#2a8a32" strokeWidth="5" />
        <path d="M482 370l5 18h-10z" fill="#2a8a32" />
        <path d="M482 451H546" stroke="#d03a3a" strokeWidth="4" />
        <path d="M563 451l-18-5v10z" fill="#d03a3a" />
        <circle cx="481" cy="451" r="3" fill="none" stroke="#3355aa" strokeWidth="1.4" />
        <g fill={dim} fontFamily="Liberation Sans, sans-serif" fontSize="16">
          <text transform="translate(473 423) rotate(40)">Ø</text>
          <text transform="translate(490 428) rotate(40)" letterSpacing="-0.5">150</text>
          <text transform="translate(505 612) rotate(40)">Ø</text>
          <text transform="translate(521 616) rotate(40)" letterSpacing="-0.5">18</text>
        </g>
        <circle cx="482" cy="600" r="7.5" fill="none" stroke="#5a86c8" strokeWidth="1.5" />
        <circle cx="482" cy="600" r="4.5" fill="#a88a50" stroke="#4a7ec8" />
        <path d="M472 590l20 17" stroke="#3a5ab8" strokeWidth="3" />
        <g fill="#3f6fc8">
          <circle cx="609" cy="549" r="2.2" /><circle cx="612" cy="555" r="2.2" /><circle cx="618" cy="557" r="2.2" />
          <circle cx="622" cy="552" r="2.2" /><circle cx="622" cy="546" r="2.2" /><circle cx="612" cy="541" r="2.2" /><circle cx="617" cy="541" r="2.2" />
        </g>
        <rect x="48" y="657" width="20" height="20" fill="#cfd0d2" stroke="#bcbdbf" />
        <path d="M47.5 677V656" stroke="#9ab89a" strokeWidth="2" />
        <path d="M48 646l2.5 11h-5z" fill="#2f9a3a" />
        <path d="M50 677H72" stroke="#d08080" strokeWidth="1.2" />
        <path d="M80 677l-13-2.5v5z" fill="#d23a3a" />
        <rect x="44" y="674" width="7" height="7" fill="#1f4fd0" />
        <rect x="45" y="673" width="6" height="2" fill="#1a2aa0" />
        <text x="43" y="642" fontSize="11" fill="#3f9a4a" fontFamily="Liberation Sans, sans-serif">Y</text>
        <text x="81" y="682" fontSize="12" fill="#d23a3a" fontFamily="Liberation Sans, sans-serif">X</text>
      </svg>
    </div>
  );
}

const Check = () => (
  <Ic w={12} h={11}><path d="M0 6l3-1.5 2 2.5 5-7 2 1.5-6.5 9.5h-1.5z" fill="#18a83c" /></Ic>
);
const Box = () => (
  <div className="w-[12px] h-[12px] border border-black bg-white flex items-center justify-center shrink-0">
    <Check />
  </div>
);
const Plus = ({ minus }: { minus?: boolean }) => (
  <div className="relative z-10 w-[9px] h-[9px] border border-[#bbb] bg-white flex items-center justify-center shrink-0">
    <div className="w-[5px] h-px bg-black" />
    {!minus && <div className="absolute w-px h-[5px] bg-black" />}
  </div>
);
const Folder = ({ eq }: { eq?: boolean }) => (
  <Ic w={17} h={16}>
    <path d="M1 5h5l1.5-2H11v3H15v8H1z" fill="#f5d870" stroke="#a88020" strokeWidth=".7" />
    <path d="M1 14l3-6h12l-2 6z" fill="#f2b820" stroke="#a88020" strokeWidth=".7" />
    {eq && <path d="M9 1h7M9 4h7" stroke="#23238a" />}
  </Ic>
);
const ModelView = () => (
  <Ic w={17} h={17}>
    <path d="M8 1l6 3v6l-6 3-6-3V4zM2 4l6 3 6-3M8 7v6M2 10l6-3 6 3M8 1v6" stroke="#18a060" />
    <path d="M8 15l6-3" stroke="#d2503a" strokeWidth="1.4" />
  </Ic>
);
const Camera = () => (
  <Ic w={16} h={15}>
    <path d="M1 13L3 4l10-3-1 12z" fill="#fff" stroke="#d23a3a" />
    <circle cx="7" cy="7" r="3" stroke="#2a2a8a" />
    <path d="M11 9l4 1v2l-4-1z" fill="#333" />
  </Ic>
);
const Datum = () => (
  <Ic w={16} h={16}>
    <path d="M2 1v9l10 5M2 10l5-4 5 2-5 2zM8 5l6-2" stroke="#444" />
    <path d="M2 1v3" stroke="#2a2ac8" /><path d="M10 14l4 2" stroke="#d23a3a" /><path d="M12 4l3-1" stroke="#2a9a3a" />
  </Ic>
);
const SketchIc = () => (
  <Ic w={16} h={16}>
    <rect x=".5" y=".5" width="15" height="15" stroke="#2a9ae0" strokeDasharray="1.5 1.5" />
    <path d="M3 3h4v4H3zM3 9h4v4H3zM9 9h4v4H9z" stroke="#222" />
    <path d="M9 6l4-4 1 1-4 4z" fill="#e8b43c" />
  </Ic>
);

function TreeRow({ odd, indent, text, bold, latest, line, children }: { odd?: boolean; indent: string; text: string; bold?: boolean; latest?: boolean; line?: string; children?: React.ReactNode }) {
  return (
    <div className={`grid grid-cols-[199px_100px_1fr] h-[20px] border-b border-[#eeeeee] ${odd ? "bg-[#f8f8f8]" : "bg-white"}`}>
      <div className={`relative flex items-center border-r border-[#eeeeee] whitespace-nowrap overflow-hidden ${indent}`}>
        {line && <div className={line} />}
        {children}
        <span className={`text-[12px] text-[#333] ${bold ? "font-bold tracking-[0.35px]" : ""}`}>{text}</span>
      </div>
      <div className="flex items-center pl-[6px] border-r border-[#eeeeee]">{latest && <Check />}</div>
      <div />
    </div>
  );
}

const Hdot = "w-[8px] border-t border-dotted border-[#888] shrink-0";

function Navigator() {
  const vert = "absolute left-[9px] top-0 bottom-0 border-l border-dotted border-[#888]";
  const vertTop = "absolute left-[9px] top-0 h-[10px] border-l border-dotted border-[#888]";
  const vert2 = "absolute left-[28px] top-0 bottom-0 border-l border-dotted border-[#888]";
  const vert2Top = "absolute left-[28px] top-0 h-[10px] border-l border-dotted border-[#888]";
  return (
    <div className="h-[183px] border border-[#d5d5d5] p-px shrink-0">
      <div className="grid grid-cols-[199px_100px_1fr] h-[21px] bg-[#f1f1f1] border-b border-[#cfcfcf] text-[12px] text-[#333]">
        <div className="flex items-center pl-[5px] border-r border-[#d5d5d5]">
          <span>名称</span>
          <span className="ml-[15px] w-0 h-0 border-x-[5px] border-x-transparent border-b-[5px] border-b-black" />
        </div>
        <div className="flex items-center pl-[6px] border-r border-[#d5d5d5]">最新</div>
        <div className="flex items-center pl-[5px]">附注</div>
      </div>
      <TreeRow indent="pl-[9px]" text="历史记录模式" line={vert}>
        <div className={Hdot} /><div className="w-[3px]" /><Clock s={16} /><div className="w-[2px]" />
      </TreeRow>
      <TreeRow odd indent="pl-[5px]" text="模型视图" line={vert}>
        <Plus /><div className="w-[4px] shrink-0" /><ModelView /><div className="w-[2px]" />
      </TreeRow>
      <TreeRow indent="pl-[5px]" text="摄像机" line={vert}>
        <Plus /><div className="w-[7px] shrink-0" /><Check /><div className="w-[3px]" /><Camera /><div className="w-[2px]" />
      </TreeRow>
      <TreeRow odd indent="pl-[9px]" text="用户表达式" line={vertTop}>
        <div className={Hdot} /><div className="w-[2px]" /><Folder eq /><div className="w-[2px]" />
      </TreeRow>
      <TreeRow indent="pl-[5px]" text="模型历史记录">
        <Plus minus /><div className="w-[5px] shrink-0" /><Folder /><div className="w-[2px]" />
      </TreeRow>
      <TreeRow odd indent="pl-[28px]" text="基准坐标系 (0)" latest line={vert2}>
        <div className={Hdot} /><div className="w-[4px]" /><Box /><div className="w-[2px]" /><Datum /><div className="w-[2px]" />
      </TreeRow>
      <TreeRow indent="pl-[28px]" text={'草图 (1) "SKETCH_...'} bold latest line={vert2Top}>
        <div className={Hdot} /><div className="w-[4px]" /><Box /><div className="w-[2px]" /><SketchIc /><div className="w-[2px]" />
      </TreeRow>
      <div className="flex items-center h-[18px] bg-[#f2f2f2]">
        <div className="w-[18px] flex justify-center"><span className="w-0 h-0 border-y-[4px] border-y-transparent border-r-[4px] border-r-black" /></div>
        <div className="w-[273px] h-[14px] rounded-[2px] border border-[#9a9a9a] bg-gradient-to-b from-[#f0f0f0] to-[#c4c4c4] flex items-center justify-center text-[8px] text-[#555]">|||</div>
        <div className="flex-1 flex justify-end pr-[6px]"><span className="w-0 h-0 border-y-[4px] border-y-transparent border-l-[4px] border-l-black" /></div>
      </div>
    </div>
  );
}

const Chevron = ({ up }: { up?: boolean }) => (
  <Ic w={12} h={8}>
    <path d={up ? "M1 7l5-5 5 5" : "M1 1l5 5 5-5"} stroke="#2a8ab8" strokeWidth="1.8" />
  </Ic>
);

const SideBtn = ({ active, children }: { active?: boolean; children?: React.ReactNode }) => (
  <div className={`w-[32px] h-[32px] border flex items-center justify-center ${active ? "border-[#b0b0b0]" : "border-[#d8d8d8]"}`}>{children}</div>
);

function Dependencies() {
  const rows = [0, 1, 2, 3, 4, 5, 6, 7, 8, 9, 10, 11];
  return (
    <div className="flex flex-col h-[281px] border border-[#d5d5d5] shrink-0">
      <div className="flex items-center justify-between h-[27px] pl-[5px] pr-[6px] pb-[3px] shrink-0">
        <span className="text-[14px] text-[#3c9cc8]">相依性</span>
        <Chevron up />
      </div>
      <div className="flex pl-[5px]">
        <div className="w-[307px] h-[247px] border border-[#d5d5d5] px-px shrink-0">
          {rows.map((r) => (
            <div key={r} className={`h-[20px] border-b border-[#e8e8e8] ${r % 2 ? "bg-[#f8f8f8]" : "bg-white"}`} />
          ))}
        </div>
        <div className="flex flex-col gap-[2px] ml-[1px]">
          <SideBtn active>
            <Ic>
              <circle cx="10" cy="10" r="8" fill="#f2f4fa" stroke="#333" strokeWidth="1.3" />
              <path d="M16 16l6 6" stroke="#555" strokeWidth="2.4" />
            </Ic>
          </SideBtn>
          <SideBtn>
            <Ic w={16} h={16}><path d="M0 5h8V0l8 8-8 8v-5H0z" fill="#b4c0c4" /></Ic>
          </SideBtn>
          <SideBtn active>
            <Ic w={16} h={16}><path d="M16 5H8V0L0 8l8 8v-5h8z" fill="#48c0d8" stroke="#2f5a70" strokeWidth=".7" /></Ic>
          </SideBtn>
          <SideBtn>
            <Ic w={21} h={22}>
              <path d="M1 1h6v6H1zM1 9h6v6H1zM1 17h6v4H1z" fill="#c4c4c4" stroke="#b0b0b0" />
              <path d="M8 4h5M8 12h5M8 19h5" stroke="#c0c0c0" />
              <path d="M14 2l5 3-4 3zM14 10l5 3-4 3zM14 17l5 2-4 3z" fill="#d4b0a4" />
            </Ic>
          </SideBtn>
        </div>
      </div>
    </div>
  );
}

function FoldRow({ text }: { text: string }) {
  return (
    <div className="flex items-center justify-between h-[24px] pl-[6px] pr-[6px] pt-[2px] border-b-2 border-[#d5d5d5] shrink-0">
      <span className="text-[14px] text-[#3c9cc8]">{text}</span>
      <Chevron />
    </div>
  );
}

function Panel() {
  return (
    <div className="flex flex-col w-[369px] shrink-0 pl-[10px] pr-[6px] bg-white">
      <div className="flex items-center h-[28px] pt-[2px] shrink-0">
        <div className="ml-[2px] w-[12px] h-[10px] border border-black border-t-2" />
        <span className="ml-[11px] text-[12px] text-[#333]">部件导航器</span>
      </div>
      <Navigator />
      <div className="h-[6px] border-y border-[#c0c0c0] bg-[#d8d8d8] shrink-0" />
      <Dependencies />
      <div className="h-px shrink-0" />
      <FoldRow text="细节" />
      <FoldRow text="预览" />
    </div>
  );
}

function Rail() {
  const s = "flex items-center justify-center w-[30px] shrink-0";
  return (
    <div className="flex flex-col w-[32px] shrink-0 bg-[#d4d4d4] border-l border-[#aaaaaa]">
      <div className={`${s} h-[24px]`}><Gear /></div>
      <div className={`${s} h-[40px] mt-[19px]`}><Assemblies /></div>
      <div className={`${s} h-[36px] mt-[6px]`}><Constraints /></div>
      <div className={`${s} h-[45px] bg-white border-y border-r border-[#bbbbbb]`}><PartNav /></div>
      <div className={`${s} h-[40px]`}><Books /></div>
      <div className={`${s} h-[40px] mt-[15px]`}><InfoWave /></div>
      <div className={`${s} h-[40px] mt-[12px]`}><DocGlobe /></div>
      <div className={`${s} h-[40px] mt-[14px]`}><Clock /></div>
      <div className={`${s} h-[40px] mt-[3px]`}><Tools /></div>
      <div className={`${s} h-[40px] mt-[3px]`}><Pages /></div>
      <div className={`${s} h-[40px] mt-[2px]`}><Pages /></div>
    </div>
  );
}

function Taskbar() {
  return (
    <div className="flex h-[7px] border-t border-[#0f2338] overflow-hidden shrink-0">
      <div className="flex items-start w-[258px] shrink-0 bg-gradient-to-b from-[#1d4468] to-[#2b5a82]">
        <div className="ml-[13px] w-[28px] h-[14px] rounded-full bg-[#d8e6f0] shrink-0" />
        <div className="ml-[18px] mt-[2px] w-[7px] h-px border-t border-dotted border-white shrink-0" />
        <div className="ml-[33px] w-[18px] h-[10px] rounded-t-full border-t-2 border-[#e8c030] shrink-0" />
        <div className="ml-[20px] w-[58px] h-[8px] bg-[#b9c4cf] rounded-t-[2px] flex justify-center shrink-0">
          <div className="w-[20px] h-[5px] rounded-t-full bg-white border-t-2 border-[#6ab04a]" />
        </div>
        <div className="ml-[4px] w-[57px] h-[8px] bg-[#e1e6ea] rounded-t-[2px] flex justify-center shrink-0">
          <div className="w-[14px] h-[5px] bg-[#e0405a]" />
        </div>
      </div>
      <div className="flex items-start flex-1 bg-gradient-to-r from-[#0c1824] to-[#1e4464]">
        <div className="ml-[742px] mt-[2px] w-[7px] h-px border-t border-dotted border-white shrink-0" />
        <span className="ml-[293px] pt-[3px] text-[12px] text-white leading-none shrink-0">11:50</span>
        <div className="ml-[21px] w-[14px] h-[8px] bg-[#8a9aa8] border border-[#d0d8e0] shrink-0" />
      </div>
    </div>
  );
}

function Watermark() {
  return (
    <svg width="80" height="90" viewBox="80 50 240 270" className="block">
      <g stroke="#ffffff" strokeWidth="2">
        <path d="M200 62l45 26c12 25 17 50 13 72l-58-30c-20-12-40-22-62-30z" fill="#d5eefc" />
        <path d="M245 88l62 37v48c-2 36-40 62-99 72l42-25v-60c6-28 3-50-5-72z" fill="#93d6f9" />
        <path d="M307 170v75l-42 24c-22 0-42-8-57-24 40 2 72-10 90-45z" fill="#82caf0" />
        <path d="M143 222c20 30 60 40 122 47l-65 38-57-33z" fill="#82d4fb" />
        <path d="M94 245v-52c8-28 28-45 50-52l-1 81v52z" fill="#aadcf9" />
        <path d="M94 125l44-25c22 3 40 10 58 22-50 0-86 26-102 66z" fill="#c2e6fb" />
      </g>
      <path d="M200 120l58 35v67l-58 33-57-33v-67z" fill="#ffffff" />
      <path d="M200 130l47 29-47 28-45-28z" fill="#c5e8fb" />
      <path d="M155 159l45 28v54l-45-26z" fill="#abdcf8" />
      <path d="M247 159v56l-47 26v-54z" fill="#83ccf2" />
    </svg>
  );
}

export default function App() {
  return (
    <div className="flex w-[1954px] h-[736px] bg-white overflow-hidden font-['Noto_Sans','Noto_Sans_CJK_SC',sans-serif] leading-none">
      <div className="flex flex-col w-[1366px] h-full shrink-0">
        <TitleBar />
        <MenuBar />
        <Toolbar1 />
        <Toolbar2 />
        <Toolbar3 />
        <StatusBar />
        <div className="flex flex-1 min-h-0">
          <Canvas />
          <Panel />
          <Rail />
        </div>
        <Taskbar />
      </div>
      <div className="pl-[300px] pt-[637px]">
        <Watermark />
      </div>
    </div>
  );
}
